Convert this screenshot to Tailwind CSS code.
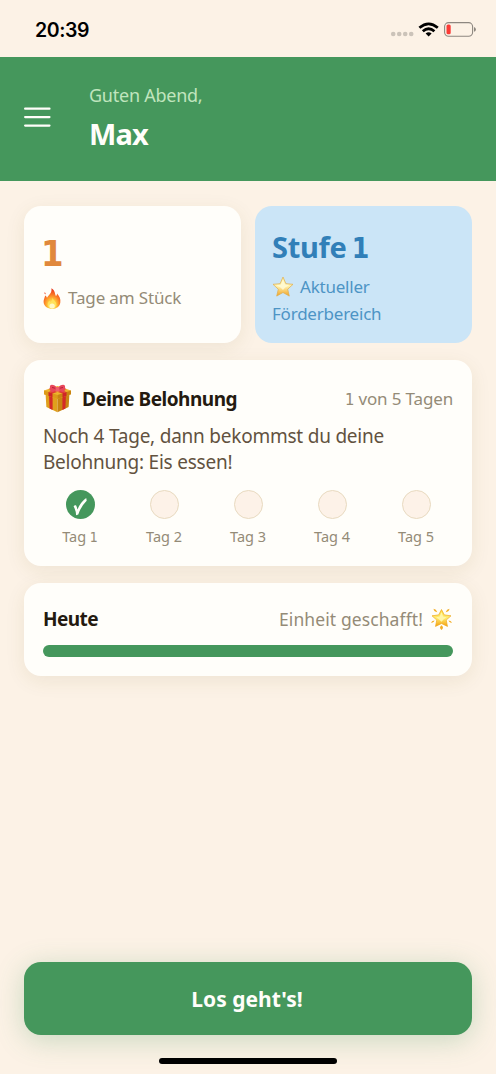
<!DOCTYPE html>
<html lang="de">
<head>
<meta charset="utf-8">
<title>Max</title>
<script src="https://cdn.jsdelivr.net/npm/@tailwindcss/browser@4"></script>
</head>
<body class="bg-[#fcf2e6]">
<svg class="absolute h-0 w-0" aria-hidden="true">
  <defs>
    <linearGradient id="gold" x1="0" y1="0" x2="0" y2="1"><stop offset="0" stop-color="#fff3a0"/><stop offset=".5" stop-color="#fff0a8"/><stop offset="1" stop-color="#f0a020"/></linearGradient>
    <linearGradient id="sun" x1="0" y1="0" x2="0" y2="1"><stop offset="0" stop-color="#ffd83a"/><stop offset=".5" stop-color="#ffec70"/><stop offset="1" stop-color="#f5a010"/></linearGradient>
    <radialGradient id="fire" cx=".5" cy=".8" r=".75"><stop offset="0" stop-color="#fff49a"/><stop offset=".35" stop-color="#ffc337"/><stop offset=".65" stop-color="#fb7a25"/><stop offset="1" stop-color="#e8381c"/></radialGradient>
  </defs>
</svg>
<div class="flex h-[1074px] w-[496px] flex-col overflow-hidden bg-[#fcf2e6] font-['Noto_Sans',sans-serif]">
  <div class="flex h-[57px] shrink-0 items-center justify-between pr-[20px] pl-[35px] pt-[3px]">
    <span class="font-['Inter',sans-serif] text-[19.5px] font-semibold leading-6 tracking-[-0.4px] text-black">20:39</span>
    <svg class="h-[18px] w-[86px]" viewBox="0 0 86 18">
      <g fill="#cbc3b9"><circle cx="3.2" cy="13" r="2.3"/><circle cx="9.2" cy="13" r="2.3"/><circle cx="15.2" cy="13" r="2.3"/><circle cx="21.2" cy="13" r="2.3"/></g>
      <g fill="none" stroke="#000" stroke-width="2.8"><path d="M29.4 6.8Q38.6-1 47.8 6.8"/><path d="M32.8 10.2Q38.6 5.2 44.4 10.2"/></g>
      <path d="M35.6 12.4Q38.6 10 41.6 12.4L38.6 15.4Z"/>
      <rect x="54.6" y="1.6" width="28" height="13.6" rx="4" fill="none" stroke="#8d8780" stroke-width="1.1"/>
      <rect x="56.5" y="3.5" width="4.2" height="9.8" rx="1.6" fill="#fb3b35"/>
      <path d="M84 6q1.9 .7 1.9 2.4T84 10.8Z" fill="#8d8780"/>
    </svg>
  </div>
  <header class="flex h-[124px] shrink-0 items-center bg-[#45975c] pl-6">
    <svg class="mt-[-4px] h-[22px] w-[27px]" viewBox="0 0 27 22" stroke="#fffefa" stroke-width="2.2" stroke-linecap="round"><path d="M1.1 2.7h24.4M1.1 11.1h24.4M1.1 19.6h24.4"/></svg>
    <div class="ml-[38px] flex flex-col whitespace-nowrap pt-px">
      <div class="h-[33px] text-[18px] leading-[26px] tracking-[-0.25px] text-[#c0e5be]">Guten Abend,</div>
      <div class="h-[42px] text-[29px] font-bold leading-[38px] tracking-[-0.9px] text-[#fffefa]">Max</div>
    </div>
  </header>
  <main class="flex flex-1 flex-col px-6 pt-[25px] pb-[39px]">
    <div class="grid h-[137px] grid-cols-2 gap-[14px]">
      <section class="rounded-[17px] bg-[#fffefa] pl-[19px] pt-[24px] shadow-[0_5px_20px_rgba(100,90,20,0.09)]">
        <div class="-ml-[2px] h-[54px] font-['DejaVu_Sans_Condensed','DejaVu_Sans',sans-serif] text-[36px] font-bold leading-[48px] text-[#e0883c]">1</div>
        <div class="flex h-[28px] items-center whitespace-nowrap text-[17px] tracking-[-0.15px] text-[#948b77]">
          <svg class="mr-[7px] h-[21px] w-[18px]" viewBox="0 0 18 21"><path d="M8.4.3C12.8 3 11.5 6.2 13 8c.9-.7 1-1.6 1-2.5C16.700 8.500 17.800 11 17.300 14.500 16.800 18.500 13.600 20.800 9.200 20.800 4.500 20.800.8 18.300.6 14 .5 11.500 1.700 9.600 2.200 7.400c1 .5 1.500 1.400 1.800 2.400C5.600 6.600 9.200 5.500 8.400.3Z" fill="url(#fire)"/><path d="M9.500 9.500c.4 2.500 3.900 4 3.900 7.200 0 2.400-1.900 3.900-4.300 3.900s-4.400-1.500-4.400-3.900c0-1.700.9-2.600 1.400-3.900.7.400 1 .9 1.300 1.600 1.200-1.300 2.200-2.800 2.100-4.900Z" fill="#ffe25c"/><ellipse cx="9.100" cy="18" rx="2.700" ry="2.500" fill="#fff8c8"/><path d="M1.500 4.300q1.700.4 1 2.200-1.600-.6-1-2.200Z" fill="#ee4a2a"/></svg>
          <span>Tage am Stück</span>
        </div>
      </section>
      <section class="rounded-[17px] bg-[#cbe5f7] pl-[17px] pt-[21px]">
        <div class="h-[46px] whitespace-nowrap text-[29px] font-bold leading-[40px] tracking-[-0.3px] text-[#317fb8]">Stufe <span class="-ml-[2px] font-['DejaVu_Sans_Condensed','DejaVu_Sans',sans-serif] text-[28px]">1</span></div>
        <div class="whitespace-nowrap text-[17px] leading-[27px] tracking-[-0.22px] text-[#4d94c5]">
          <div class="flex h-[27px] items-center"><svg class="mr-[6px] h-[21px] w-[22px]" viewBox="0 0 22 21"><path d="M11 1l2.900 6.700 7.100.6-5.300 4.900 1.600 6.900L11 16.500l-6.300 3.600 1.600-6.900L1 8.300l7.100-.6Z" fill="url(#gold)" stroke="#dfac4c" stroke-width=".7" stroke-linejoin="round"/><path d="M11 3.500l2 5 4.500.6-4.300 2.300L11 14l-2.500-2.400L4 9.200l4.800-.5Z" fill="#fffbd8" opacity=".8"/></svg><span>Aktueller</span></div>
          <div>Förderbereich</div>
        </div>
      </section>
    </div>
    <section class="mt-[17px] h-[206px] rounded-[17px] bg-[#fffefa] px-[19px] pt-[22px] shadow-[0_5px_20px_rgba(100,90,20,0.09)]">
      <div class="flex h-[33px] items-center whitespace-nowrap">
        <svg class="mr-[10px] -mt-px h-[29px] w-[29px]" viewBox="0 0 29 29"><path d="M2.500 9 14.500 13v15.200L3.400 23Z" fill="#e0a01c"/><path d="M26.500 9 14.500 13v15.200L25.600 23Z" fill="#c98412"/><path d="M6 10.200l3.600 1.300v14.600L6.600 24.500ZM23 10.200l-3.600 1.300v14.600l3-1.600Z" fill="#d42b28"/><path d="M1 6.500 14.500 2 28 6.500v3.800L14.500 15 1 10.300Z" fill="#eeb42c"/><path d="M1 6.500 14.500 11v4L1 10.300Z" fill="#dc9a18"/><path d="M28 6.500 14.500 11v4L28 10.300Z" fill="#c98412"/><path d="M5.500 8l4 1.300v4l-4-1.400ZM23.500 8l-4 1.300v4l4-1.400Z" fill="#cf2528"/><path d="M5.500 8 19 3.400l4.500 1.500-14 4.500ZM23.500 8 10 3.400 5.500 4.900l14 4.500Z" fill="#e03a35"/><path d="M14.500 4.600C12 .5 8 .2 7.200 1.600c-.6 1.500-.4 4.500.4 6 1.700 1 5-.4 6.900-1.800 1.900 1.400 5.200 2.800 6.900 1.800.8-1.500 1-4.500.4-6C21 .2 17 .5 14.500 4.600Z" fill="#e8485a"/><path d="M9 3.500q2.500 0 4.300 2M20 3.500q-2.500 0-4.300 2" stroke="#b81c38" fill="none"/><rect x="12.500" y="3" width="4" height="4.500" rx="1.500" fill="#f0606c"/></svg>
        <span class="pt-px text-[19px] font-bold tracking-[-0.5px] text-[#241a10]">Deine Belohnung</span>
        <span class="ml-auto pt-px text-[17px] tracking-[-0.15px] text-[#948b77]"><span class="font-['DejaVu_Sans_Condensed','DejaVu_Sans',sans-serif] text-[16.5px]">1</span> von 5 Tagen</span>
      </div>
      <div class="mt-[8px] whitespace-nowrap text-[19px] leading-[26px] tracking-[-0.23px] text-[#62523f]">
        <div>Noch 4 Tage, dann bekommst du deine</div>
        <div>Belohnung: Eis essen!</div>
      </div>
      <div class="mt-[15px] flex justify-between px-[16px] text-[14.5px] leading-[20px] text-[#948b77]">
        <div class="flex w-[42px] flex-col items-center whitespace-nowrap"><svg class="mb-[7px] h-[29px] w-[29px]" viewBox="0 0 29 29"><circle cx="14.500" cy="14.500" r="14.500" fill="#45975c"/><path d="M7.600 16.200Q8.400 14.900 10 15.200Q11.200 17.200 11.400 19.600 14.500 12 20.200 8L20.700 10.700Q14.800 16.500 12.300 24.500L10.100 25.200Q9.900 20.500 7.600 16.200Z" fill="#fffefa"/></svg><span>Tag <span class="font-['DejaVu_Sans_Condensed','DejaVu_Sans',sans-serif] text-[14px]">1</span></span></div>
        <div class="flex w-[42px] flex-col items-center whitespace-nowrap"><div class="mb-[7px] size-[29px] rounded-full border border-[#e8dac0] bg-[#fdf2e8]"></div><span>Tag 2</span></div>
        <div class="flex w-[42px] flex-col items-center whitespace-nowrap"><div class="mb-[7px] size-[29px] rounded-full border border-[#e8dac0] bg-[#fdf2e8]"></div><span>Tag 3</span></div>
        <div class="flex w-[42px] flex-col items-center whitespace-nowrap"><div class="mb-[7px] size-[29px] rounded-full border border-[#e8dac0] bg-[#fdf2e8]"></div><span>Tag 4</span></div>
        <div class="flex w-[42px] flex-col items-center whitespace-nowrap"><div class="mb-[7px] size-[29px] rounded-full border border-[#e8dac0] bg-[#fdf2e8]"></div><span>Tag 5</span></div>
      </div>
    </section>
    <section class="mt-[17px] h-[93px] rounded-[17px] bg-[#fffefa] px-[19px] pt-[22px] shadow-[0_5px_20px_rgba(100,90,20,0.09)]">
      <div class="flex h-[28px] items-center whitespace-nowrap">
        <span class="pt-px text-[19px] font-bold tracking-[-0.55px] text-[#241a10]">Heute</span>
        <span class="ml-auto text-[17.5px] tracking-[0.1px] text-[#948b77]">Einheit geschafft!</span>
        <svg class="ml-[7px] -mt-px h-[23px] w-[23px]" viewBox="0 0 23 23"><path d="M11.500 2.500l2.800 5.400 6.700.9-4.800 4.300 1.300 6.300-6-2.900-6 2.900 1.300-6.300L2 8.800l6.700-.9Z" fill="url(#sun)" stroke="#eea91f" stroke-width=".7" stroke-linejoin="round"/><path d="M11.500 5l1.600 4.500 3.400.8-3 2.200-2 2.300-2.400-2.300-3-2.200 3.600-.8Z" fill="#fff6a8"/><path d="M3.500 1.800q2.800.5 3.800 3.400-3.200-.3-3.800-3.400ZM19.500 1.800q-2.800.5-3.800 3.400 3.200-.3 3.800-3.400ZM1 15.600q1.200-2 3.600-2-.9 2.600-3.600 2ZM22 15.600q-1.200-2-3.600-2 .9 2.600 3.600 2ZM11.500 18.200q3 2.400 0 4.700-3-2.300 0-4.700Z" fill="#f3ad25"/></svg>
      </div>
      <div class="mt-[12px] h-[12px] rounded-full bg-[#45975c]"></div>
    </section>
    <button class="mt-auto h-[73px] w-full shrink-0 rounded-[17px] bg-[#45975c] pt-[2px] pr-[2px] text-[21px] font-bold text-[#fffefa] shadow-[0_5px_28px_rgba(69,151,92,0.28)]">Los geht's!</button>
  </main>
  <div class="absolute left-[159px] top-[1058px] h-[6px] w-[178px] rounded-full bg-black"></div>
</div>
</body>
</html>
